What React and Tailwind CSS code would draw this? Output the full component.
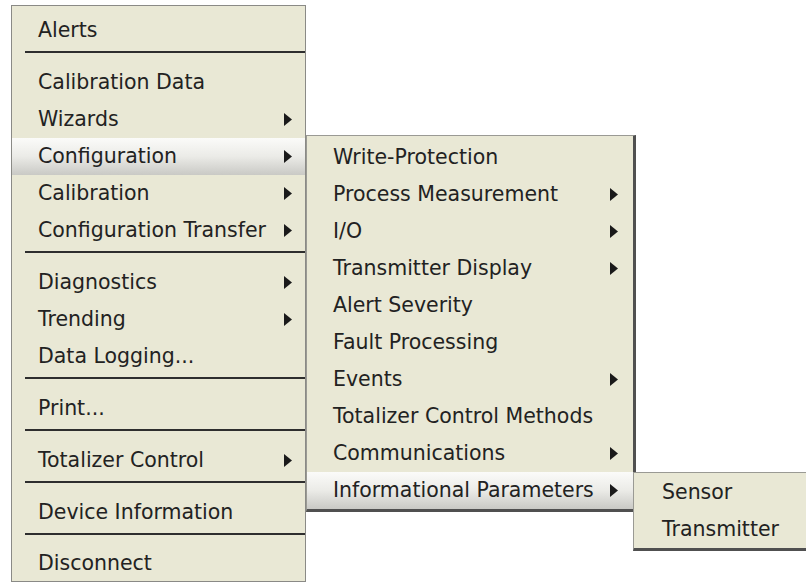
import React from "react";

const mainItems = [
  { label: "Alerts" },
  { sep: true },
  { label: "Calibration Data" },
  { label: "Wizards", sub: true },
  { label: "Configuration", sub: true, active: true },
  { label: "Calibration", sub: true },
  { label: "Configuration Transfer", sub: true },
  { sep: true },
  { label: "Diagnostics", sub: true },
  { label: "Trending", sub: true },
  { label: "Data Logging..." },
  { sep: true },
  { label: "Print..." },
  { sep: true },
  { label: "Totalizer Control", sub: true },
  { sep: true },
  { label: "Device Information" },
  { sep: true },
  { label: "Disconnect", last: true },
];

const configItems = [
  { label: "Write-Protection" },
  { label: "Process Measurement", sub: true },
  { label: "I/O", sub: true },
  { label: "Transmitter Display", sub: true },
  { label: "Alert Severity" },
  { label: "Fault Processing" },
  { label: "Events", sub: true },
  { label: "Totalizer Control Methods" },
  { label: "Communications", sub: true },
  { label: "Informational Parameters", sub: true, active: true },
];

const infoItems = [{ label: "Sensor" }, { label: "Transmitter" }];

const Arrow = () => (
  <svg width="8" height="13" viewBox="0 0 8 13" className="shrink-0">
    <polygon points="0,0 8,6.5 0,13" fill="#1a1a1a" />
  </svg>
);

const Row = ({ item, pl, pr }) => (
  <div
    className={
      "flex items-center justify-between " +
      (item.last ? "h-[35px] " : "h-[37px] ") +
      (item.active
        ? "bg-gradient-to-b from-[#fbfbf9] via-[#ebebe7] to-[#c9c9c5]"
        : "")
    }
    style={{ paddingLeft: pl, paddingRight: pr }}
  >
    <span className="whitespace-nowrap">{item.label}</span>
    {item.sub && <Arrow />}
  </div>
);

const Separator = () => (
  <div className="h-[15px] pt-[2px] pl-[13px]">
    <div className="h-[2px] bg-[#2e2e2e]" />
  </div>
);

export default function App() {
  return (
    <div
      className="w-full h-[582px] overflow-hidden bg-white flex items-start text-[20.5px] leading-none text-[#222]"
      style={{ fontFamily: '"DejaVu Sans", Verdana, sans-serif' }}
    >
      {/* main context menu */}
      <div className="shrink-0 ml-[11px] mt-[5px] w-[295px] border border-[#8a8a86] bg-[#e9e8d5] pt-[6px]">
        {mainItems.map((item, i) =>
          item.sep ? <Separator key={i} /> : <Row key={i} item={item} pl={26} pr={13} />
        )}
      </div>

      {/* Configuration submenu */}
      <div className="shrink-0 mt-[135px] w-[330px] border-l border-t border-[#9a9a94] border-r-[3px] border-b-[3px] border-r-[#505050] border-b-[#505050] bg-[#e9e8d5] pt-[3px]">
        {configItems.map((item, i) => (
          <Row key={i} item={item} pl={26} pr={15} />
        ))}
      </div>

      {/* Informational Parameters submenu */}
      <div className="shrink-0 -ml-[3px] mt-[472px] w-[200px] border-l border-t border-[#9a9a94] border-b-[3px] border-b-[#505050] bg-[#e9e8d5] pt-[1px]">
        {infoItems.map((item, i) => (
          <Row key={i} item={item} pl={28} pr={15} />
        ))}
      </div>
    </div>
  );
}
